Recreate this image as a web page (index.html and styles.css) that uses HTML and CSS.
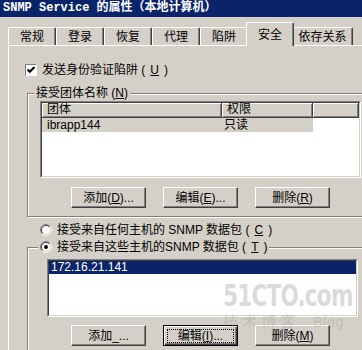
FILE: index.html
```html
<!DOCTYPE html>
<html lang="zh-CN">
<head>
  <meta charset="UTF-8" />
  <title>SNMP Service 的属性</title>
  <link rel="stylesheet" href="styles.css">
</head>
<body>

<div class="dialog">
  <!-- Title bar -->
  <div class="titlebar">SNMP Service 的属性（本地计算机）</div>

  <!-- Tabs -->
  <ul class="tabs">
    <li class="tab">常规</li>
    <li class="tab">登录</li>
    <li class="tab">恢复</li>
    <li class="tab">代理</li>
    <li class="tab">陷阱</li>
    <li class="tab active">安全</li>
    <li class="tab tab-wide">依存关系</li>
  </ul>

  <!-- Security page -->
  <div class="panel">
    <label class="check-row">
      <span class="checkbox">
        <svg width="10" height="10" viewBox="0 0 10 10"><polyline points="1.5,4.5 3.8,6.8 8.5,2" fill="none" stroke="#000" stroke-width="2"/></svg>
      </span>
      发送身份验证陷阱 (<u>U</u>)
    </label>

    <fieldset class="group group-community">
      <legend>接受团体名称 (<u>N</u>)</legend>
      <div class="listview">
        <div class="lv-inner">
          <div class="lv-head">
            <span class="c1">团体</span>
            <span class="c2">权限</span>
            <span class="c3"></span>
          </div>
          <div class="lv-row">
            <span class="c1">ibrapp144</span>
            <span class="c2">只读</span>
          </div>
        </div>
      </div>
      <div class="buttons">
        <button class="btn">添加(<u>D</u>)...</button>
        <button class="btn">编辑(<u>E</u>)...</button>
        <button class="btn">删除(<u>R</u>)</button>
      </div>
    </fieldset>

    <label class="radio-row">
      <svg class="radio" width="12" height="12" viewBox="0 0 12 12">
        <circle cx="6" cy="6" r="4.5" fill="#fff"/>
        <path d="M2.1 9.9 A5.5 5.5 0 0 1 9.9 2.1" fill="none" stroke="#808080"/>
        <path d="M2.8 9.2 A4.5 4.5 0 0 1 9.2 2.8" fill="none" stroke="#404040"/>
        <path d="M9.9 2.1 A5.5 5.5 0 0 1 2.1 9.9" fill="none" stroke="#fff"/>
        <path d="M9.2 2.8 A4.5 4.5 0 0 1 2.8 9.2" fill="none" stroke="#d4d0c8"/>
      </svg>
      接受来自任何主机的 SNMP 数据包 (<u>C</u>)
    </label>

    <fieldset class="group group-hosts">
      <legend>
        <svg class="radio" width="12" height="12" viewBox="0 0 12 12">
          <circle cx="6" cy="6" r="4.5" fill="#fff"/>
          <path d="M2.1 9.9 A5.5 5.5 0 0 1 9.9 2.1" fill="none" stroke="#808080"/>
          <path d="M2.8 9.2 A4.5 4.5 0 0 1 9.2 2.8" fill="none" stroke="#404040"/>
          <path d="M9.9 2.1 A5.5 5.5 0 0 1 2.1 9.9" fill="none" stroke="#fff"/>
          <path d="M9.2 2.8 A4.5 4.5 0 0 1 2.8 9.2" fill="none" stroke="#d4d0c8"/>
          <circle cx="6" cy="6" r="2" fill="#000"/>
        </svg>
        接受来自这些主机的SNMP 数据包 (<u>T</u>)
      </legend>
      <div class="listbox">
        <div class="lb-inner">
          <div class="lb-row selected">172.16.21.141</div>
        </div>
      </div>
      <div class="buttons buttons-hosts">
        <button class="btn">添加_...</button>
        <button class="btn btn-focus"><span class="focus-ring">编辑(<u>I</u>)...</span></button>
        <button class="btn">删除(<u>M</u>)</button>
      </div>
    </fieldset>
  </div>

  <!-- Watermark -->
  <div class="watermark">
    <div class="wm-logo">51CTO.com</div>
    <div class="wm-sub"><span>技术博客</span><span class="wm-blog">Blog</span></div>
  </div>
</div>

</body>
</html>
```

FILE: styles.css
```css
* {
  margin: 0;
  padding: 0;
  box-sizing: border-box;
}

html, body {
  width: 362px;
  height: 350px;
  overflow: hidden;
}

body {
  background: #d4d0c8;
  font-family: "Liberation Sans", "Noto Sans CJK SC", sans-serif;
  font-size: 12px;
  color: #000;
}

.dialog {
  width: 372px;
  position: relative;
}

/* Title bar */
.titlebar {
  height: 17px;
  padding-left: 3px;
  background: #0a246a;
  color: #fff;
  font-family: "Liberation Mono", "Noto Sans CJK SC", monospace;
  font-weight: bold;
  font-size: 12px;
  line-height: 17px;
  white-space: nowrap;
}

/* Tabs */
.tabs {
  display: flex;
  align-items: flex-end;
  height: 28px;
  padding-left: 8px;
  list-style: none;
}

.tab {
  flex-shrink: 0;
  width: 48px;
  height: 18px;
  padding-top: 2px;
  border: 1px solid #fff;
  border-bottom: 0;
  border-right-color: #404040;
  border-radius: 2px 2px 0 0;
  box-shadow: inset -1px 0 0 #808080;
  text-align: center;
  line-height: 14px;
}

.tab-wide {
  width: 61px;
}

.tab.active {
  height: 24px;
  margin: 0 -2px -1px;
  padding-top: 5px;
  background: #d4d0c8;
  position: relative;
  z-index: 1;
}

/* Page */
.panel {
  margin-left: 8px;
  padding: 17px 0 20px 16px;
  border-top: 1px solid #fff;
  border-left: 1px solid #fff;
}

.check-row,
.radio-row {
  display: flex;
  align-items: center;
  gap: 5px;
  height: 14px;
  line-height: 14px;
  white-space: nowrap;
}

.checkbox {
  display: block;
  width: 12px;
  height: 12px;
  border: 1px solid;
  border-color: #808080 #fff #fff #808080;
  background: #fff;
}

.checkbox svg {
  display: block;
}

.radio {
  display: block;
  flex-shrink: 0;
}

.radio-row {
  margin: 6px 0 0 15px;
}

/* Group boxes */
.group {
  width: 345px;
  min-inline-size: 0;
  margin: 9px 0 0 2px;
  padding: 1px 0 8px 12px;
  border: 1px solid #808080;
  box-shadow: inset 1px 1px 0 #fff, 1px 1px 0 #fff;
}

.group legend {
  padding: 0 2px;
  margin-left: -6px;
  line-height: 14px;
  background: #d4d0c8;
  white-space: nowrap;
}

.group-hosts {
  margin-top: 3px;
  padding: 5px 0 20px 19px;
}

.group-hosts legend {
  display: flex;
  align-items: center;
  gap: 5px;
  margin-left: -9px;
}

/* List view */
.listview,
.listbox {
  border: 1px solid;
  border-color: #808080 #fff #fff #808080;
}

.lv-inner,
.lb-inner {
  height: 100%;
  border: 1px solid;
  border-color: #404040 #d4d0c8 #d4d0c8 #404040;
  background: #fff;
}

.listview {
  width: 321px;
  height: 77px;
}

.lv-head {
  display: flex;
  height: 15px;
  line-height: 13px;
}

.lv-head span {
  background: #d4d0c8;
  border-right: 1px solid #404040;
  border-bottom: 1px solid #404040;
  box-shadow: inset 1px 1px 0 #fff, inset -1px -1px 0 #808080;
  padding-left: 5px;
}

.c1 {
  width: 180px;
}

.c2 {
  width: 91px;
}

.lv-head .c3 {
  flex: 1;
}

.lv-row {
  display: flex;
  height: 14px;
  line-height: 14px;
}

.lv-row span {
  background: #d4d0c8;
  padding-left: 5px;
}

.lv-row .c2 {
  padding-left: 2px;
}

.listbox {
  width: 311px;
  height: 58px;
}

.lb-row {
  height: 13px;
  padding-left: 2px;
  line-height: 13px;
}

.lb-row.selected {
  background: #0a246a;
  color: #fff;
}

/* Buttons */
.buttons {
  display: flex;
  gap: 17px;
  margin-top: 9px;
  padding-left: 31px;
}

.buttons-hosts {
  margin-top: 8px;
  padding-left: 24px;
}

.btn {
  width: 75px;
  height: 21px;
  padding: 0;
  border: 1px solid;
  border-color: #fff #404040 #404040 #fff;
  box-shadow: inset -1px -1px 0 #808080;
  background: #d4d0c8;
  font: inherit;
  line-height: 14px;
  color: #000;
}

.btn-focus {
  border-color: #000;
  box-shadow: inset 1px 1px 0 #fff, inset -1px -1px 0 #404040, inset -2px -2px 0 #808080;
}

.focus-ring {
  display: block;
  margin: 0 3px;
  border: 1px dotted #000;
  line-height: 12px;
}

/* Watermark over the lower list */
.watermark {
  position: absolute;
  left: 223px;
  top: 280px;
  color: rgba(150, 150, 150, 0.35);
  pointer-events: none;
}

.wm-logo {
  font-family: "DejaVu Sans", sans-serif;
  font-stretch: condensed;
  font-weight: bold;
  font-size: 30px;
  line-height: 32px;
  letter-spacing: -1px;
  white-space: nowrap;
  transform: scaleX(0.8);
  transform-origin: left center;
}

.wm-sub {
  display: flex;
  align-items: baseline;
  font-family: "Noto Sans CJK SC", sans-serif;
  font-size: 15px;
  line-height: 18px;
  letter-spacing: 4px;
  white-space: nowrap;
}

.wm-blog {
  margin-left: 14px;
  font-family: "DejaVu Sans", sans-serif;
  font-size: 14px;
  letter-spacing: 0;
}
```
